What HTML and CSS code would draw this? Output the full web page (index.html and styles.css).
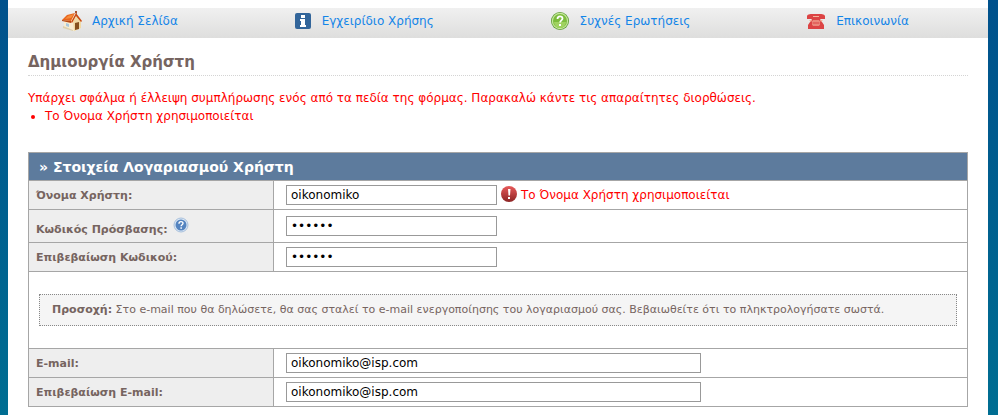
FILE: index.html
```html
<!DOCTYPE html>
<html lang="el">
<head>
  <meta charset="UTF-8">
  <meta name="viewport" content="width=device-width, initial-scale=1.0">
  <title>Δημιουργία Χρήστη</title>
  <link rel="stylesheet" href="styles.css">
</head>
<body>
  <div class="page">
    <nav class="menu">
      <a href="#">
        <svg class="icon" width="20" height="20" viewBox="0 0 20 20">
          <path d="M2 10l9-5 8 5v7l-7 3-10-4z" fill="#f8edd2"/>
          <path d="M11 10l4-5 4 5v7l-7 3z" fill="#f0d9a4"/>
          <path d="M0 9l5-5 8-2-4 8z" fill="#e8641c"/>
          <path d="M3 8l3-3 6-2-3 4z" fill="#f58d3c"/>
          <path d="M0 9l9 1v2l-9-2z" fill="#b84a14"/>
          <path d="M9 11l5-9 6 8-1 1-5-6-4 7z" fill="#c9480f"/>
          <path d="M13 0h2v3l-2-1z" fill="#a9512e"/>
          <path d="M13 12l4-1v7l-4 1z" fill="#85511e"/>
          <path d="M4 12l3 1v3l-3-1z" fill="#a9c8dc"/>
          <path d="M1 15l10 4v1L1 17z" fill="#ddd0ac"/>
        </svg>
        Αρχική Σελίδα
      </a>
      <a href="#">
        <svg class="icon" width="18" height="20" viewBox="0 0 18 20">
          <rect x="1" y="2" width="16" height="16" rx="2" fill="#32659a"/>
          <path d="M7 4h4v3H7zM6 8h5v6h1v2H6v-2h1v-4H6z" fill="#fff"/>
        </svg>
        Εγχειρίδιο Χρήσης
      </a>
      <a href="#">
        <svg class="icon" width="20" height="20" viewBox="0 0 20 20">
          <circle cx="10" cy="10" r="9" fill="#5f9f35"/>
          <circle cx="10" cy="10" r="7.6" fill="#7cbc3c" stroke="#c6e79d" stroke-width="1.2"/>
          <path d="M4 11a6 6 0 0 0 12 0z" fill="#a0d260"/>
          <path d="M7.500 8c0-3.600 5-3.200 5-.4 0 1.800-2.400 1.900-2.400 4" fill="none" stroke="#fff" stroke-width="1.800"/>
          <rect x="9" y="13" width="2" height="2" fill="#fff"/>
        </svg>
        Συχνές Ερωτήσεις
      </a>
      <a href="#">
        <svg class="icon" width="20" height="20" viewBox="0 0 20 20">
          <path d="M1 5c1-2 3-2 9-2s8 0 9 2v3h-5V6H6v2H1z" fill="#dc4444"/>
          <path d="M6 5h8v3l4 6v4H2v-4l4-6z" fill="#dc4444"/>
          <path d="M7 5h6v1H7zM3 9h3l-1 2zM14 9h3l-2 2z" fill="#f3b49c"/>
          <path d="M7 9h6l1 3-1 3H7l-1-3z" fill="#f9cdb2"/>
          <path d="M8 9v6M10 9v6M12 9v6M6 12h8" stroke="#dc4444"/>
        </svg>
        Επικοινωνία
      </a>
    </nav>

    <main class="content">
      <h1>Δημιουργία Χρήστη</h1>

      <div class="errors">
        <p>Υπάρχει σφάλμα ή έλλειψη συμπλήρωσης ενός από τα πεδία της φόρμας. Παρακαλώ κάντε τις απαραίτητες διορθώσεις.</p>
        <ul>
          <li>Το Όνομα Χρήστη χρησιμοποιείται</li>
        </ul>
      </div>

      <form>
        <table class="account">
          <thead>
            <tr>
              <th colspan="2">» Στοιχεία Λογαριασμού Χρήστη</th>
            </tr>
          </thead>
          <tbody>
            <tr>
              <td class="label"><label for="username">Όνομα Χρήστη:</label></td>
              <td>
                <div class="field">
                  <input type="text" id="username" class="short" value="oikonomiko">
                  <svg width="16" height="18" viewBox="0 0 16 18">
                    <defs>
                      <linearGradient id="alert" x1="0" y1="0" x2="0" y2="1">
                        <stop offset="0" stop-color="#e85a5a"/>
                        <stop offset="1" stop-color="#8c2424"/>
                      </linearGradient>
                    </defs>
                    <circle cx="8" cy="8" r="8" fill="url(#alert)"/>
                    <path d="M7 3h2.500L9 9.500H7.500zM7 11h2v2H7z" fill="#fff"/>
                  </svg>
                  <span class="error">Το Όνομα Χρήστη χρησιμοποιείται</span>
                </div>
              </td>
            </tr>
            <tr class="tall">
              <td class="label">
                <label for="password">Κωδικός Πρόσβασης:</label>
                <svg class="help" width="16" height="16" viewBox="0 0 16 16">
                  <circle cx="8" cy="8" r="7" fill="#d9e6f4" stroke="#a8c0dc"/>
                  <circle cx="8" cy="8" r="5.500" fill="#5484c0"/>
                  <path d="M6 6.700c0-2.800 4-2.600 4-.4 0 1.400-1.900 1.400-1.900 3" fill="none" stroke="#fff" stroke-width="1.400"/>
                  <rect x="7.400" y="10.300" width="1.500" height="1.500" fill="#fff"/>
                </svg>
              </td>
              <td><div class="field"><input type="password" id="password" class="short" value="isp123"></div></td>
            </tr>
            <tr>
              <td class="label"><label for="password2">Επιβεβαίωση Κωδικού:</label></td>
              <td><div class="field"><input type="password" id="password2" class="short" value="isp123"></div></td>
            </tr>
            <tr>
              <td colspan="2" class="notice">
                <p><strong>Προσοχή:</strong> Στο e-mail που θα δηλώσετε, θα σας σταλεί το e-mail ενεργοποίησης του λογαριασμού σας. Βεβαιωθείτε ότι το πληκτρολογήσατε σωστά.</p>
              </td>
            </tr>
            <tr>
              <td class="label"><label for="email">E-mail:</label></td>
              <td><div class="field"><input type="text" id="email" class="long" value="oikonomiko@isp.com"></div></td>
            </tr>
            <tr>
              <td class="label"><label for="email2">Επιβεβαίωση E-mail:</label></td>
              <td><div class="field"><input type="text" id="email2" class="long" value="oikonomiko@isp.com"></div></td>
            </tr>
          </tbody>
        </table>
      </form>
    </main>
  </div>
</body>
</html>
```

FILE: styles.css
```css
* {
  box-sizing: border-box;
  margin: 0;
  padding: 0;
}

body {
  min-height: 100vh;
  padding: 0 10px 0 8px;
  background: linear-gradient(#00518c, #006e92);
  color: #766460;
  font-family: Verdana, "DejaVu Sans", sans-serif;
  font-size: 12px;
}

.page {
  min-height: 100vh;
  padding-top: 8px;
  background: #fff;
}

.menu {
  display: flex;
  justify-content: space-between;
  align-items: center;
  height: 30px;
  padding: 0 79px 4px 54px;
  background: linear-gradient(#f0f0f0, #dededd);
}

.menu a {
  display: flex;
  align-items: center;
  gap: 10px;
  color: #1485e8;
  text-decoration: none;
}

.content {
  padding: 14px 20px 8px;
}

h1 {
  height: 24px;
  border-bottom: 1px dotted #d4d4d4;
  font-size: 15px;
  line-height: 20px;
}

.errors {
  padding: 13px 0 27px;
  color: #f00;
  line-height: 18px;
}

.errors ul {
  padding-left: 17px;
}

.account {
  width: 100%;
  border-collapse: collapse;
}

.account th,
.account td {
  height: 29px;
  border: 1px solid #a6a6a6;
}

.account th {
  height: 28px;
  padding-left: 10px;
  background: #5d7b9d;
  color: #fff;
  font-size: 14px;
  text-align: left;
}

.account .label {
  width: 245px;
  padding-left: 7px;
  background: #eee;
  font-size: 11px;
  font-weight: bold;
}

.account .tall td {
  height: 33px;
}

.help {
  margin-left: 2px;
}

.field {
  display: flex;
  align-items: center;
  gap: 4px;
  padding-left: 12px;
}

.field input {
  height: 20px;
  padding: 0 4px;
  border: 1px solid #999;
  background: #fff;
  color: #000;
  font-family: Verdana, "DejaVu Sans", sans-serif;
  font-size: 12px;
}

.short {
  width: 211px;
}

.long {
  width: 415px;
}

.error {
  color: #f00;
}

.account .notice {
  height: 77px;
  padding: 0 10px;
}

.notice p {
  padding: 8px 12px;
  border: 1px dotted #888;
  background: #f5f5f5;
  font-size: 11px;
  line-height: 14px;
}
```
